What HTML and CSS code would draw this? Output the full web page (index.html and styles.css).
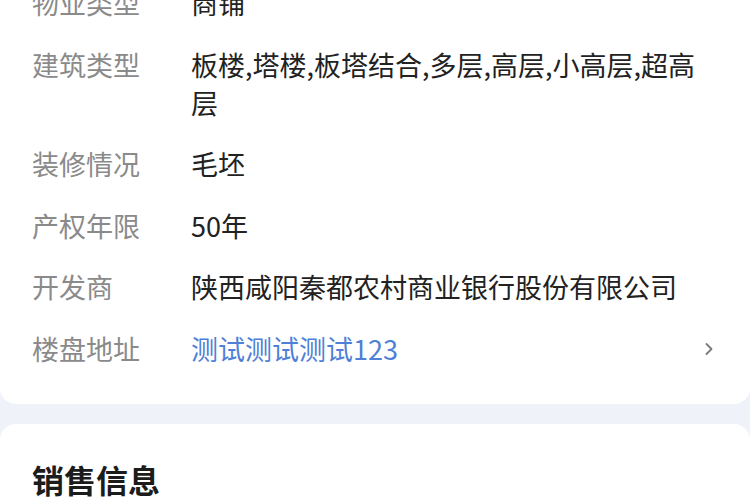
FILE: index.html
```html
<!DOCTYPE html>
<html lang="zh-CN">
<head>
    <meta charset="UTF-8">
    <title>楼盘详情</title>
    <link rel="stylesheet" href="styles.css">
</head>
<body>
    <div class="card info-card">
        <div class="info-row">
            <span class="info-label">物业类型</span>
            <span class="info-value">商铺</span>
        </div>
        <div class="info-row">
            <span class="info-label">建筑类型</span>
            <span class="info-value">板楼,塔楼,板塔结合,多层,高层,小高层,超高层</span>
        </div>
        <div class="info-row">
            <span class="info-label">装修情况</span>
            <span class="info-value">毛坯</span>
        </div>
        <div class="info-row">
            <span class="info-label">产权年限</span>
            <span class="info-value">50年</span>
        </div>
        <div class="info-row">
            <span class="info-label">开发商</span>
            <span class="info-value">陕西咸阳秦都农村商业银行股份有限公司</span>
        </div>
        <div class="info-row">
            <span class="info-label">楼盘地址</span>
            <span class="info-value link">测试测试测试123</span>
            <svg class="arrow" width="10" height="16" viewBox="0 0 10 16">
                <path d="M2.5 3 L7.5 8 L2.5 13" fill="none" stroke="#7a7a7a" stroke-width="1.8" stroke-linecap="round" stroke-linejoin="round"/>
            </svg>
        </div>
    </div>

    <div class="card sale-card">
        <h3 class="card-title">销售信息</h3>
    </div>
</body>
</html>
```

FILE: styles.css
```css
body {
    margin: 0;
    background: #f0f2fa;
    font-family: "Noto Sans CJK SC", "Noto Sans", sans-serif;
    overflow: hidden;
}

.card {
    background: #fff;
    border-radius: 16px;
    padding: 24px 32px 36px;
}

.info-card {
    margin-top: -40px;
    display: flex;
    flex-direction: column;
    gap: 23.5px;
}

.info-row {
    display: flex;
    align-items: flex-start;
    font-size: 27px;
    line-height: 38px;
}

.info-label {
    width: 159px;
    flex-shrink: 0;
    color: #8a8a8a;
}

.info-value {
    flex: 1;
    color: #222;
    padding-right: 12px;
}

.info-value.link {
    color: #4f7fd8;
}

.arrow {
    margin-top: 11px;
    margin-right: 4px;
}

.sale-card {
    margin-top: 20px;
    padding-top: 33px;
}

.card-title {
    margin: 0;
    font-size: 32px;
    line-height: 44px;
    font-weight: bold;
    color: #1c1c1c;
}
```
